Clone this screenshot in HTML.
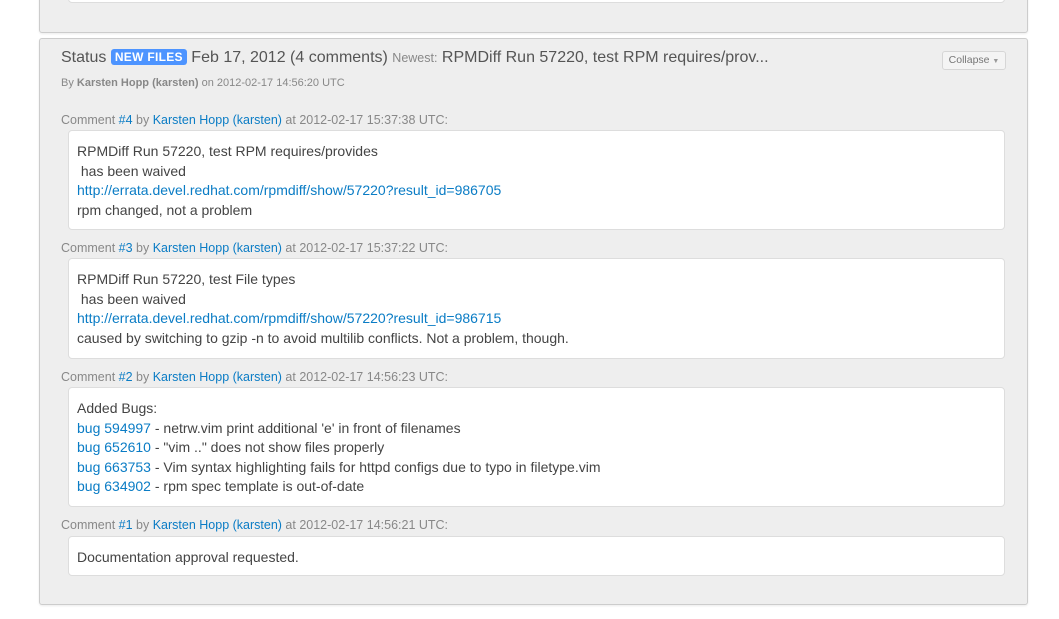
<!DOCTYPE html>
<html><head><meta charset="utf-8"><style>
body{margin:0;width:1059px;height:619px;background:#fff;font-family:"Liberation Sans","DejaVu Sans",sans-serif;color:#555;position:relative;overflow:hidden}
.panel{position:absolute;left:39px;width:987px;background:#eee;border:1px solid #ccc;border-radius:3px;box-shadow:0 1px 2px rgba(0,0,0,.08)}
.box{position:absolute;left:68px;width:937px;background:#fff;border:1px solid #ddd;border-radius:4px;box-sizing:border-box;padding:11px 0 0 8px;font-size:14px;line-height:19.5px;color:#444}
.hdr{position:absolute;left:61px;font-size:12.5px;color:#888;white-space:nowrap}
a{color:#0a7cc5;text-decoration:none}
.t{position:absolute;white-space:nowrap}
</style></head><body>
<div class="panel" style="top:-20px;height:51px"></div>
<div class="box" style="top:-20px;height:23px"></div>
<div class="panel" style="top:38px;height:565px"></div>
<div class="t" style="left:61px;top:49px;font-size:16px;color:#555">Status <span style="display:inline-block;background:#4d94ff;color:#fff;font-weight:bold;font-size:12px;border-radius:3px;padding:1px 4px;vertical-align:1px;letter-spacing:.3px">NEW FILES</span> Feb 17, 2012 (4 comments) <span style="font-size:12.5px;color:#888">Newest:</span> RPMDiff Run 57220, test RPM requires/prov...</div>
<div class="t" style="left:942px;top:51px;width:62px;height:17px;border:1px solid #d6d6d6;border-radius:3px;background:#f4f4f4;font-size:10.5px;color:#777;text-align:center;line-height:17px">Collapse <span style="font-size:7px;color:#999">▼</span></div>
<div class="t" style="left:61px;top:77px;font-size:11px;color:#888">By <b style="color:#888">Karsten Hopp (karsten)</b> on 2012-02-17 14:56:20 UTC</div>

<div class="hdr" style="top:113px">Comment <a>#4</a> by <a>Karsten Hopp (karsten)</a> at 2012-02-17 15:37:38 UTC:</div>
<div class="box" style="top:130px;height:100px">RPMDiff Run 57220, test RPM requires/provides<br>&nbsp;has been waived<br><a>http://errata.devel.redhat.com/rpmdiff/show/57220?result_id=986705</a><br>rpm changed, not a problem</div>

<div class="hdr" style="top:241px">Comment <a>#3</a> by <a>Karsten Hopp (karsten)</a> at 2012-02-17 15:37:22 UTC:</div>
<div class="box" style="top:258px;height:101px">RPMDiff Run 57220, test File types<br>&nbsp;has been waived<br><a>http://errata.devel.redhat.com/rpmdiff/show/57220?result_id=986715</a><br>caused by switching to gzip -n to avoid multilib conflicts. Not a problem, though.</div>

<div class="hdr" style="top:370px">Comment <a>#2</a> by <a>Karsten Hopp (karsten)</a> at 2012-02-17 14:56:23 UTC:</div>
<div class="box" style="top:387px;height:120px">Added Bugs:<br><a>bug 594997</a> - netrw.vim print additional 'e' in front of filenames<br><a>bug 652610</a> - "vim .." does not show files properly<br><a>bug 663753</a> - Vim syntax highlighting fails for httpd configs due to typo in filetype.vim<br><a>bug 634902</a> - rpm spec template is out-of-date</div>

<div class="hdr" style="top:518px">Comment <a>#1</a> by <a>Karsten Hopp (karsten)</a> at 2012-02-17 14:56:21 UTC:</div>
<div class="box" style="top:536px;height:40px">Documentation approval requested.</div>
</body></html>
